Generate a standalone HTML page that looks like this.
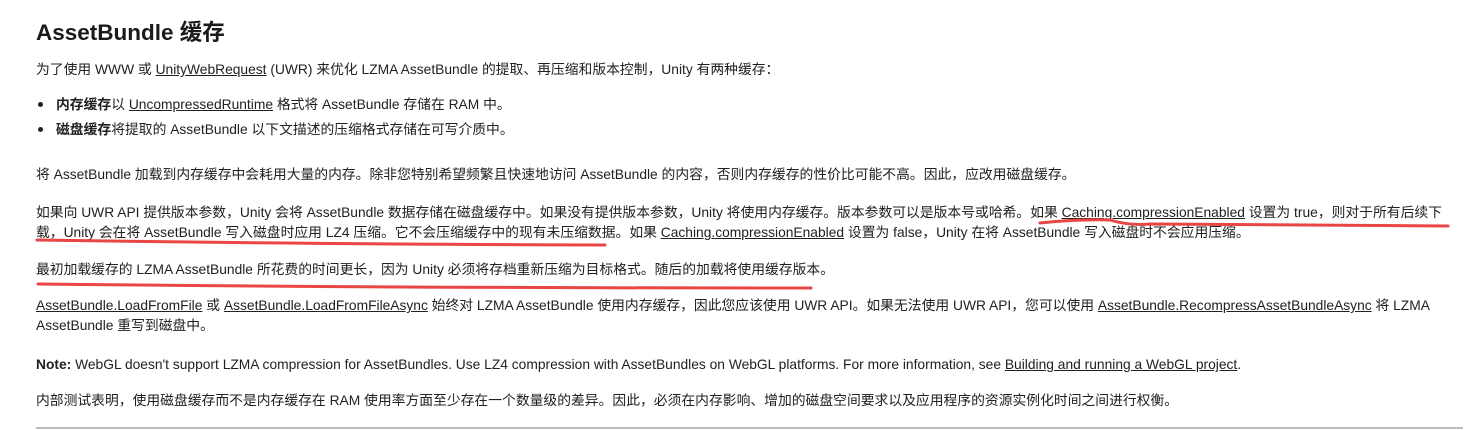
<!DOCTYPE html>
<html><head><meta charset="utf-8"><style>
body{margin:0;width:1473px;height:430px;background:#fff;position:relative;overflow:hidden;font-family:"Liberation Sans","Noto Sans CJK SC",sans-serif;color:#212121;}
.l{position:absolute;left:36px;font-size:13.8px;white-space:nowrap;line-height:20px;}
a{color:#212121;text-decoration:underline;}
h1{position:absolute;left:36px;top:15px;margin:0;font-size:22.5px;font-weight:bold;color:#1a1a1a;}
.dot{position:absolute;left:38px;width:5px;height:5px;border-radius:50%;background:#222;}
hr{position:absolute;left:36px;top:427px;width:1427px;margin:0;border:0;border-top:2px solid #bbb;}
svg{position:absolute;left:0;top:0}
</style></head><body>
<h1>AssetBundle 缓存</h1>
<div class="l" style="top:60px">为了使用 WWW 或 <a>UnityWebRequest</a> (UWR) 来优化 LZMA AssetBundle 的提取、再压缩和版本控制，Unity 有两种缓存：</div>
<div class="dot" style="top:102px"></div>
<div class="l" style="top:95px;left:56px"><b>内存缓存</b>以 <a>UncompressedRuntime</a> 格式将 AssetBundle 存储在 RAM 中。</div>
<div class="dot" style="top:127px"></div>
<div class="l" style="top:120px;left:56px"><b>磁盘缓存</b>将提取的 AssetBundle 以下文描述的压缩格式存储在可写介质中。</div>
<div class="l" style="top:165px">将 AssetBundle 加载到内存缓存中会耗用大量的内存。除非您特别希望频繁且快速地访问 AssetBundle 的内容，否则内存缓存的性价比可能不高。因此，应改用磁盘缓存。</div>
<div class="l" style="top:203px">如果向 UWR API 提供版本参数，Unity 会将 AssetBundle 数据存储在磁盘缓存中。如果没有提供版本参数，Unity 将使用内存缓存。版本参数可以是版本号或哈希。如果 <a>Caching.compressionEnabled</a> 设置为 true，则对于所有后续下</div>
<div class="l" style="top:223px">载，Unity 会在将 AssetBundle 写入磁盘时应用 LZ4 压缩。它不会压缩缓存中的现有未压缩数据。如果 <a>Caching.compressionEnabled</a> 设置为 false，Unity 在将 AssetBundle 写入磁盘时不会应用压缩。</div>
<div class="l" style="top:260px">最初加载缓存的 LZMA AssetBundle 所花费的时间更长，因为 Unity 必须将存档重新压缩为目标格式。随后的加载将使用缓存版本。</div>
<div class="l" style="top:296px"><a>AssetBundle.LoadFromFile</a> 或 <a>AssetBundle.LoadFromFileAsync</a> 始终对 LZMA AssetBundle 使用内存缓存，因此您应该使用 UWR API。如果无法使用 UWR API，您可以使用 <a>AssetBundle.RecompressAssetBundleAsync</a> 将 LZMA</div>
<div class="l" style="top:316px">AssetBundle 重写到磁盘中。</div>
<div class="l" style="top:355px"><b>Note:</b> WebGL doesn't support LZMA compression for AssetBundles. Use LZ4 compression with AssetBundles on WebGL platforms. For more information, see <a>Building and running a WebGL project</a>.</div>
<div class="l" style="top:391px">内部测试表明，使用磁盘缓存而不是内存缓存在 RAM 使用率方面至少存在一个数量级的差异。因此，必须在内存影响、增加的磁盘空间要求以及应用程序的资源实例化时间之间进行权衡。</div>
<hr>
<svg width="1473" height="430">
<path d="M1040 223 Q1080 219 1110 220 Q1130 226 1150 224 L1448 226" stroke="#e84545" stroke-width="3" fill="none" stroke-linecap="round"/>
<path d="M37 240 Q300 244 605 245" stroke="#e84545" stroke-width="3" fill="none" stroke-linecap="round"/>
<path d="M38 284 Q400 288 811 288" stroke="#e84545" stroke-width="3" fill="none" stroke-linecap="round"/>
</svg>
</body></html>
